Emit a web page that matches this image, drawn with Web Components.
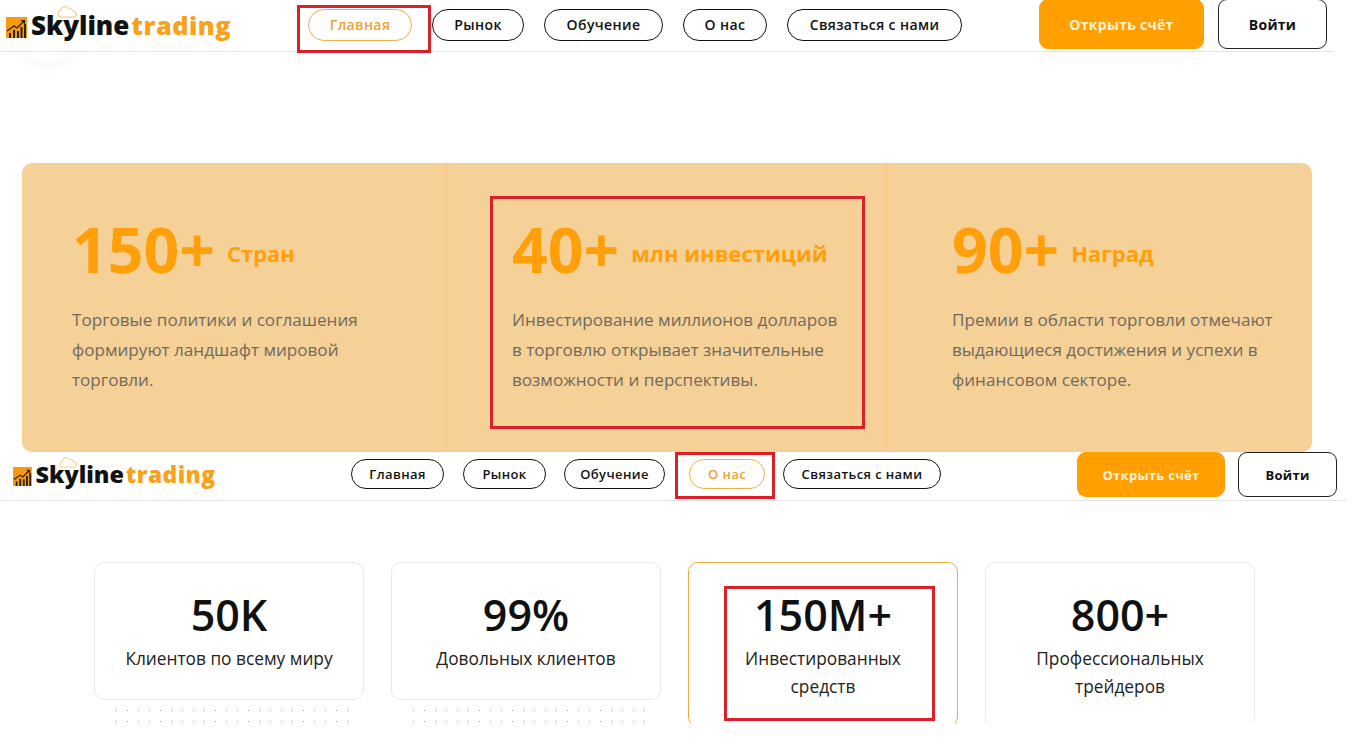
<!DOCTYPE html>
<html lang="ru">
<head>
<meta charset="utf-8">
<title>Skylinetrading</title>
<style>
  html, body { margin: 0; background: #fff; }
  body { width: 1364px; height: 744px; overflow: hidden; position: relative; font-family: "Open Sans", "Noto Sans", sans-serif; }
</style>
</head>
<body>
  <soft-circle></soft-circle>

  <site-header style="--h:52px;--pad:6px;--line:1332px;--right:5px;--below:2px;--logo-w:302px;--gap:20px;--actions-gap:14px;--pill-h:32px;--pill-fs:14px;--nav-shift:0px;--btn-h:50px">
    <brand-logo slot="logo" style="--scale:1"></brand-logo>
    <nav-pill active style="--w:104px">Главная</nav-pill>
    <nav-pill style="--w:92px">Рынок</nav-pill>
    <nav-pill style="--w:119px">Обучение</nav-pill>
    <nav-pill style="--w:84px">О нас</nav-pill>
    <nav-pill style="--w:175px">Связаться с нами</nav-pill>
    <header-button slot="actions" primary style="--w:165px">Открыть счёт</header-button>
    <header-button slot="actions" style="--w:109px">Войти</header-button>
  </site-header>

  <stats-panel>
    <stat-col value="150+" unit="Стран">Торговые политики и соглашения формируют ландшафт мировой торговли.</stat-col>
    <stat-col value="40+" unit="млн инвестиций">Инвестирование миллионов долларов в торговлю открывает значительные возможности и перспективы.</stat-col>
    <stat-col value="90+" unit="Наград" style="--pr:30px">Премии в области торговли отмечают выдающиеся достижения и успехи в финансовом секторе.</stat-col>
  </stats-panel>

  <site-header style="--h:49px;--pad:13px;--line:1347px;--right:10px;--below:3px;--logo-w:338px;--gap:19px;--actions-gap:13px;--pill-h:30px;--pill-fs:13px;--nav-shift:-1px;--btn-h:45px">
    <brand-logo slot="logo" style="--scale:.9"></brand-logo>
    <nav-pill style="--w:93px">Главная</nav-pill>
    <nav-pill style="--w:83px;margin-right:-1px">Рынок</nav-pill>
    <nav-pill style="--w:101px;margin-right:5px">Обучение</nav-pill>
    <nav-pill active style="--w:76px;margin-right:-1px">О нас</nav-pill>
    <nav-pill style="--w:158px">Связаться с нами</nav-pill>
    <header-button slot="actions" primary style="--w:148px;font-size:13px">Открыть счёт</header-button>
    <header-button slot="actions" style="--w:99px;font-size:13px">Войти</header-button>
  </site-header>

  <metric-row>
    <metric-card value="50K">Клиентов по всему миру</metric-card>
    <metric-card value="99%">Довольных клиентов</metric-card>
    <metric-card value="150M+" active>Инвестированных средств</metric-card>
    <metric-card value="800+">Профессиональных трейдеров</metric-card>
  </metric-row>

  <mark-box style="--x:297px;--y:5px;--w:134px;--h:48px"></mark-box>
  <mark-box style="--x:490px;--y:196px;--w:375px;--h:233px"></mark-box>
  <mark-box style="--x:675px;--y:452px;--w:100px;--h:47px"></mark-box>
  <mark-box style="--x:724px;--y:586px;--w:211px;--h:135px"></mark-box>

<script>
// small helper, every element gets an open shadow root from a string
function shadow(el, html) {
  el.attachShadow({ mode: 'open' }).innerHTML = html;
}

class SiteHeader extends HTMLElement {
  connectedCallback() {
    shadow(this, `
      <style>
        :host { display: block; position: relative; z-index: 1; height: var(--h); background: #fff; overflow: hidden; }
        .bar { box-sizing: border-box; display: flex; align-items: flex-end; height: 100%; width: var(--line); padding: 0 var(--right) var(--below) var(--pad); border-bottom: 1px solid #e3e3e3; }
        .logo { flex: 0 0 var(--logo-w); align-self: stretch; display: flex; align-items: center; }
        nav { display: flex; gap: var(--gap); align-self: center; transform: translateY(var(--nav-shift)); }
        .actions { margin-left: auto; display: flex; gap: var(--actions-gap); }
      </style>
      <div class="bar">
        <div class="logo"><slot name="logo"></slot></div>
        <nav><slot></slot></nav>
        <div class="actions"><slot name="actions"></slot></div>
      </div>`);
  }
}

class BrandLogo extends HTMLElement {
  connectedCallback() {
    shadow(this, `
      <style>
        :host { display: block; zoom: var(--scale); }
        .wrap { display: flex; align-items: center; position: relative; height: 34px; }
        svg.mark { width: 21px; height: 21px; flex: none; margin-top: 5px; }
        svg.cloud { position: absolute; left: 51px; top: -2px; width: 21px; height: 12px; }
        .txt { font: 800 26px/34px "Open Sans", sans-serif; color: #111; margin-left: 4px; }
        b { font-weight: 800; font-size: 25.3px; color: #f9a11b; letter-spacing: .55px; margin-left: 2px; }
      </style>
      <div class="wrap">
        <svg class="mark" viewBox="0 0 21 21">
          <rect width="21" height="21" fill="#f79a0e"/>
          <path d="M1 14 8 9l3 2 6-6" fill="none" stroke="#2a2016" stroke-width="1.3"/>
          <path d="M14.5 3H19v4.5z" fill="#2a2016"/>
          <path d="M3 16h2v5H3zM7 13h2v8H7zM11 14h2v7h-2zM14.5 10h2v11h-2zM18 7h2v14h-2z" fill="#2a2016"/>
        </svg>
        <svg class="cloud" viewBox="0 0 22 12">
          <path d="M4 11.4a3.3 3.3 0 0 1-.4-6.5 4.6 4.6 0 0 1 8.7-2 3.3 3.3 0 0 1 4.6 2.5 2.9 2.9 0 0 1 1 5.9z" fill="none" stroke="#f6b45a" stroke-width=".9"/>
        </svg>
        <span class="txt">Skyline<b>trading</b></span>
      </div>`);
  }
}

class NavPill extends HTMLElement {
  connectedCallback() {
    const active = this.hasAttribute('active');
    shadow(this, `
      <style>
        :host { display: block; width: var(--w); }
        div { box-sizing: border-box; height: var(--pill-h); display: flex; align-items: center; justify-content: center;
          border: 1px solid ${active ? '#f0b04a' : '#111'}; border-radius: 17px; background: #fff;
          font: 600 var(--pill-fs) "Open Sans", sans-serif; letter-spacing: .4px; color: ${active ? '#f5a030' : '#111'}; white-space: nowrap; }
      </style>
      <div><slot></slot></div>`);
  }
}

class HeaderButton extends HTMLElement {
  connectedCallback() {
    const primary = this.hasAttribute('primary');
    shadow(this, `
      <style>
        :host { display: block; width: var(--w); font-size: 14px; }
        div { box-sizing: border-box; height: var(--btn-h); display: flex; align-items: center; justify-content: center;
          border-radius: 9px; border: 1px solid ${primary ? '#ff9f00' : '#222'};
          background: ${primary ? '#ff9f00' : '#fff'}; color: ${primary ? '#fff2d8' : '#111'};
          font-family: "Open Sans", sans-serif; font-weight: 700; letter-spacing: .3px; white-space: nowrap; }
      </style>
      <div><slot></slot></div>`);
  }
}

class StatsPanel extends HTMLElement {
  connectedCallback() {
    shadow(this, `
      <style>
        :host { display: grid; grid-template-columns: 424px 440px 1fr; width: 1290px; height: 289px; margin: 111px 0 0 22px;
          box-sizing: border-box; background: #f5d097; border-radius: 10px; overflow: hidden; }
      </style>
      <slot></slot>`);
  }
}

class StatCol extends HTMLElement {
  connectedCallback() {
    shadow(this, `
      <style>
        :host { display: block; box-sizing: border-box; padding: 47px var(--pr, 40px) 0 65px; border-left: 1px solid #f5c27c; }
        :host(:first-child) { border-left: 0; padding-left: 50px; }
        .head { display: flex; align-items: center; gap: 12px; color: #ff9f0a; font-family: "Open Sans", sans-serif; font-weight: 700; }
        .val { font-size: 62.5px; line-height: 78px; }
        .unit { font-size: 22px; line-height: 30px; margin-top: 8px; }
        p { margin: 17px 0 0; font: 400 17.1px/30px "Open Sans", sans-serif; color: #706b60; }
      </style>
      <div class="head"><span class="val">${this.getAttribute('value')}</span><span class="unit">${this.getAttribute('unit')}</span></div>
      <p><slot></slot></p>`);
  }
}

class MetricRow extends HTMLElement {
  connectedCallback() {
    shadow(this, `
      <style>
        :host { display: flex; align-items: flex-start; gap: 27px; box-sizing: border-box; height: 161px; margin-top: 61px; padding-left: 94px; overflow: hidden; position: relative; }
      </style>
      <slot></slot>`);
  }
}

class MetricCard extends HTMLElement {
  connectedCallback() {
    const active = this.hasAttribute('active');
    shadow(this, `
      <style>
        :host { display: block; width: 270px; flex: none; position: relative; }
        .card { box-sizing: border-box; min-height: 138px; padding: 22px 27px 25px; border: 1px solid ${active ? '#eeab3e' : '#e8e8e8'}; border-radius: 10px; background: #fff; text-align: center; position: relative; z-index: 1; }
        .val { font: 600 43px/60px "Open Sans", sans-serif; color: #111; }
        .txt { font: 400 17.3px/28px "Open Sans", sans-serif; color: #222; }
        .dots { position: absolute; left: 17px; top: 143px; width: 242px; height: 22px;
          background: radial-gradient(circle, #a8a8a8 .6px, transparent 1px) 0 0 / 11px 11px; }
      </style>
      <div class="card"><div class="val">${this.getAttribute('value')}</div><div class="txt"><slot></slot></div></div>
      <div class="dots"></div>`);
  }
}

class MarkBox extends HTMLElement {
  connectedCallback() {
    shadow(this, `
      <style>
        :host { display: block; position: absolute; z-index: 5; left: var(--x); top: var(--y); width: var(--w); height: var(--h); box-sizing: border-box; border: 3px solid #dc2028; pointer-events: none; }
      </style>`);
  }
}

class SoftCircle extends HTMLElement {
  connectedCallback() {
    shadow(this, `
      <style>
        :host { display: block; position: absolute; left: 21px; top: 8px; width: 54px; height: 54px; border-radius: 50%; background: #fff; box-shadow: 0 4px 14px rgba(40,40,90,.05); }
      </style>`);
  }
}

customElements.define('site-header', SiteHeader);
customElements.define('brand-logo', BrandLogo);
customElements.define('nav-pill', NavPill);
customElements.define('header-button', HeaderButton);
customElements.define('stats-panel', StatsPanel);
customElements.define('stat-col', StatCol);
customElements.define('metric-row', MetricRow);
customElements.define('metric-card', MetricCard);
customElements.define('mark-box', MarkBox);
customElements.define('soft-circle', SoftCircle);
</script>
</body>
</html>
